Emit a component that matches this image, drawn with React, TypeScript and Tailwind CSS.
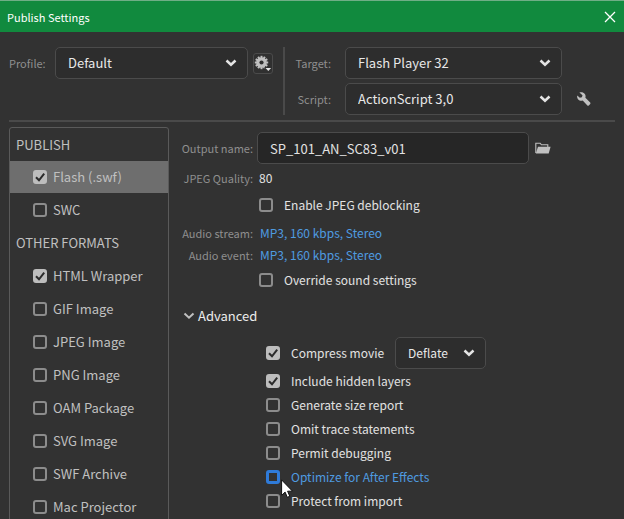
import React, { useState } from 'react';

interface Format {
  name: string;
  checked?: boolean;
  active?: boolean;
}

interface SelectProps {
  id: string;
  options: string[];
  className?: string;
}

interface CheckProps {
  id: string;
  checked?: boolean;
  highlight?: boolean;
}

const publishFormats: Format[] = [{ name: 'Flash (.swf)', checked: true, active: true }, { name: 'SWC' }];

const otherFormats: Format[] = [
  { name: 'HTML Wrapper', checked: true },
  { name: 'GIF Image' },
  { name: 'JPEG Image' },
  { name: 'PNG Image' },
  { name: 'OAM Package' },
  { name: 'SVG Image' },
  { name: 'SWF Archive' },
  { name: 'Mac Projector' },
];

const advancedOptions = [
  { name: 'Include hidden layers', checked: true },
  { name: 'Generate size report' },
  { name: 'Omit trace statements' },
  { name: 'Permit debugging' },
  { name: 'Optimize for After Effects', highlight: true },
  { name: 'Protect from import' },
];

const toId = (name: string) => name.toLowerCase().replace(/[^a-z]+/g, '-');

const Chevron = ({ className }: { className?: string }) => (
  <svg viewBox="0 0 12 8" className={className} fill="none" stroke="currentColor">
    <path d="M1.500 1.500 6 5.700l4.500-4.200" />
  </svg>
);

const GearIcon = () => (
  <svg viewBox="0 0 18 19" className="h-[19px] w-[18px]" fill="#c0c0c0">
    <g transform="translate(7.500 8.500)">
      {[0, 30, 60, 90, 120, 150].map((angle) => (
        <rect key={angle} x="-1" y="-6.700" width="2" height="13.400" transform={`rotate(${angle})`} />
      ))}
      <circle r="3.700" fill="none" stroke="#c0c0c0" strokeWidth="3.200" />
      <circle r="2.100" fill="#303030" />
    </g>
    <path d="M10.500 13h7.500v2l-3 3h-1.500l-3-3z" fill="#303030" />
    <path d="M11.500 14h5.600l-2.800 3z" fill="#e8e8e8" />
  </svg>
);

const WrenchIcon = () => (
  <svg viewBox="0 0 16 16" className="size-4" fill="#c0c0c0">
    <path d="M3.400 1.600C5.300.8 7.600 1.300 8.800 3c.8 1.100 1 2.500.6 3.800l4.800 4.700c.4.4.4 1 0 1.400l-1.400 1.500c-.4.4-1 .4-1.400 0L6.700 9.500C5.100 10 3.300 9.600 2.200 8.400 1.200 7.300.9 5.900 1.300 4.600l2.500 2.200 2.100-.5.6-2.100z" />
  </svg>
);

const FolderIcon = () => (
  <svg viewBox="0 0 16 12" className="h-3 w-4">
    <path d="M.8 11V1.200h4.400l1.200 1.600h6.400V5" fill="none" stroke="#c0c0c0" strokeWidth="1.100" />
    <path d="M3 4.700h12.600L13.700 11.600H.8z" fill="#c0c0c0" />
  </svg>
);

const Checkbox: React.FC<CheckProps> = ({ id, checked = false, highlight }: CheckProps) => {
  const [on, setOn] = useState(checked);
  const color = on ? 'border-[#bdbdbd] bg-[#bdbdbd]' : highlight ? 'border-[#2f7bd9]' : 'border-[#8c8c8c]';
  return (
    <span className="grid size-3.5 shrink-0">
      <input
        id={id}
        type="checkbox"
        checked={on}
        onChange={() => setOn(!on)}
        className={`col-start-1 row-start-1 size-3.5 appearance-none rounded-[3px] ${highlight ? 'border-3' : 'border-2'} ${color}`}
      />
      {on && (
        <svg viewBox="0 0 14 14" className="pointer-events-none col-start-1 row-start-1" fill="none" stroke="#2b2b2b" strokeWidth="2">
          <path d="M3 7.200 6 10.300 11.200 3.600" />
        </svg>
      )}
    </span>
  );
};

const Select: React.FC<SelectProps> = ({ id, options, className }: SelectProps) => (
  <span className={`grid items-center ${className}`}>
    <select
      id={id}
      className="col-start-1 row-start-1 h-8 w-full appearance-none rounded-[5px] border border-[#4b4b4b] bg-[#2d2d2d] pl-3 pr-8 text-[#e8e8e8]"
    >
      {options.map((option) => (
        <option key={option}>{option}</option>
      ))}
    </select>
    <Chevron className="pointer-events-none col-start-1 row-start-1 mr-[11px] h-2 w-3 justify-self-end stroke-[2.5] text-[#e4e4e4]" />
  </span>
);

const FormatRow = ({ format }: { format: Format }) => (
  <li className={`flex h-8 items-center gap-1.5 pl-[23px] ${format.active ? 'bg-[#6e6e6e]' : ''}`}>
    <Checkbox id={toId(format.name)} checked={format.checked} />
    <label htmlFor={toId(format.name)}>{format.name}</label>
  </li>
);

const App: React.FC = () => {
  const [open, setOpen] = useState(true);

  return (
    <div className="flex h-screen flex-col overflow-hidden whitespace-nowrap bg-[#323232] font-['Noto_Sans_CJK_SC','Noto_Sans',sans-serif] text-[13px] leading-5 text-[#e2e2e2]">
      <header className="flex h-8 shrink-0 items-center justify-between border-t border-[#6fae86] bg-[#118a3e] pl-[7px] pr-2 text-[11px] text-white">
        <h1>Publish Settings</h1>
        <button aria-label="Close" className="size-3">
          <svg viewBox="0 0 12 12" className="size-3" stroke="currentColor" strokeWidth="1.300">
            <path d="M1 1l10 10M11 1L1 11" />
          </svg>
        </button>
      </header>

      <section className="mx-[9px] flex shrink-0 border-b-2 border-[#4a4a4a] pb-[5px] pt-[15px]">
        <div className="flex h-8 items-center">
          <label htmlFor="profile" className="w-[46px] text-[11px] text-[#8f8f8f]">
            Profile:
          </label>
          <Select id="profile" options={['Default']} className="w-[193px]" />
          <button aria-label="Profile options" className="ml-[5px] rounded-[3px] border border-[#4b4b4b] bg-[#303030]">
            <GearIcon />
          </button>
        </div>
        <div className="ml-2.5 grid grid-cols-[46px_217px_16px] items-center gap-x-3.5 gap-y-1 border-l-2 border-[#4a4a4a]">
          <label htmlFor="target" className="text-right text-[11px] text-[#8f8f8f]">
            Target:
          </label>
          <Select id="target" options={['Flash Player 32']} />
          <span />
          <label htmlFor="script" className="text-right text-[11px] text-[#8f8f8f]">
            Script:
          </label>
          <Select id="script" options={['ActionScript 3,0']} />
          <button aria-label="ActionScript settings">
            <WrenchIcon />
          </button>
        </div>
      </section>

      <main className="flex min-h-0 flex-1 items-start gap-2 pl-[9px] pr-2 pt-[5px]">
        <nav className="w-40 shrink-0 rounded-[3px] border border-[#5a5a5a] text-[#c0c0c0]">
          <h2 className="flex h-[33px] items-center pl-1.5">PUBLISH</h2>
          <ul className="flex flex-col gap-px pb-px">
            {publishFormats.map((format) => (
              <FormatRow key={format.name} format={format} />
            ))}
          </ul>
          <h2 className="flex h-8 items-center pl-1.5">OTHER FORMATS</h2>
          <ul className="flex flex-col gap-px pt-px">
            {otherFormats.map((format) => (
              <FormatRow key={format.name} format={format} />
            ))}
          </ul>
        </nav>

        <div className="min-w-0 flex-1 pt-[5px] text-xs">
          <div className="grid grid-cols-[76px_minmax(0,1fr)] items-center gap-x-1">
            <label htmlFor="output" className="text-right text-[11px] text-[#8f8f8f]">
              Output name:
            </label>
            <div className="flex items-center gap-1.5">
              <input
                id="output"
                type="text"
                defaultValue="SP_101_AN_SC83_v01"
                className="h-8 w-full max-w-[272px] rounded-[5px] border border-[#4b4b4b] bg-[#262626] px-3 text-[13px]"
              />
              <button aria-label="Browse">
                <FolderIcon />
              </button>
            </div>

            <span className="text-right text-[11px] text-[#8f8f8f]">JPEG Quality:</span>
            <span className="flex h-7 items-center pl-0.5">80</span>

            <div className="col-start-2 flex h-[26px] items-center gap-[11px] pl-0.5">
              <Checkbox id="deblocking" />
              <label htmlFor="deblocking">Enable JPEG deblocking</label>
            </div>

            <span className="mt-1 text-right text-[11px] text-[#8f8f8f]">Audio stream:</span>
            <a href="#stream" className="mt-1 pl-[3px] leading-[22px] text-[#4f9be0]">
              MP3, 160 kbps, Stereo
            </a>

            <span className="text-right text-[11px] text-[#8f8f8f]">Audio event:</span>
            <a href="#event" className="pl-[3px] leading-[22px] text-[#4f9be0]">
              MP3, 160 kbps, Stereo
            </a>

            <div className="col-start-2 flex h-7 items-center gap-[11px] pl-0.5">
              <Checkbox id="override" />
              <label htmlFor="override">Override sound settings</label>
            </div>
          </div>

          <button
            onClick={() => setOpen(!open)}
            className="flex h-[43px] items-center gap-[3px] pl-1.5 text-[13px] text-[#ececec]"
          >
            <Chevron className="h-2 w-3 stroke-2 text-[#c0c0c0]" />
            Advanced
          </button>

          {open && (
            <div className="pl-[89px]">
              <div className="flex items-center gap-[11px]">
                <Checkbox id="compress" checked />
                <label htmlFor="compress">Compress movie</label>
                <Select id="compression" options={['Deflate']} className="w-[91px]" />
              </div>
              {advancedOptions.map((option) => (
                <div key={option.name} className="relative flex h-6 items-center gap-[11px]">
                  <Checkbox id={toId(option.name)} checked={option.checked} highlight={option.highlight} />
                  <label htmlFor={toId(option.name)} className={option.highlight ? 'text-[#4f9be0]' : ''}>
                    {option.name}
                  </label>
                  {option.highlight && (
                    <svg viewBox="0 0 12 19" className="absolute left-[15px] top-3.5 z-10 h-[19px] w-3">
                      <path
                        d="M.6.900v15.500l3.500-3.300 2.200 5.200 2.500-1-2.200-5.100h4.900z"
                        fill="#fff"
                        stroke="#111"
                        strokeWidth="1"
                      />
                    </svg>
                  )}
                </div>
              ))}
            </div>
          )}
        </div>
      </main>
    </div>
  );
};

export default App;
